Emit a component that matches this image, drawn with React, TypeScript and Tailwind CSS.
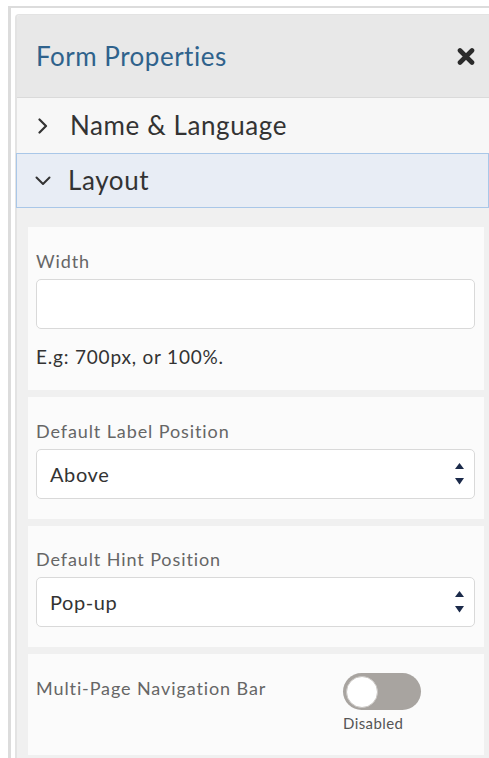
import React from 'react';

const font = { fontFamily: 'Lato, "Open Sans", "Liberation Sans", sans-serif' };

const Chevron: React.FC<{ open?: boolean }> = ({ open }) =>
  open ? (
    <svg width="16" height="10" viewBox="0 0 16 10" className="shrink-0">
      <path d="M1.5 1.5 L8 8 L14.5 1.5" fill="none" stroke="#333" strokeWidth="2" strokeLinecap="round" strokeLinejoin="round" />
    </svg>
  ) : (
    <svg width="10" height="16" viewBox="0 0 10 16" className="shrink-0">
      <path d="M1.5 1.5 L8 8 L1.5 14.5" fill="none" stroke="#333" strokeWidth="2.2" strokeLinecap="round" strokeLinejoin="round" />
    </svg>
  );

const CloseIcon: React.FC = () => (
  <svg width="18" height="17" viewBox="0 0 18 17">
    <path d="M3 2.5 L15 14.5 M15 2.5 L3 14.5" fill="none" stroke="#2b2b2b" strokeWidth="4.6" strokeLinecap="round" />
  </svg>
);

const SelectArrows: React.FC = () => (
  <svg width="9" height="22" viewBox="0 0 9 22">
    <path d="M4.5 0 L9 6 L0 6 Z" fill="#1b2a4a" />
    <path d="M0 15 L9 15 L4.5 21.5 Z" fill="#1b2a4a" />
  </svg>
);

const Select: React.FC<{ value: string }> = ({ value }) => (
  <div className="h-[50px] rounded-[5px] border border-[#d9d9d9] bg-white flex items-center justify-between pl-[13px] pr-[10px]">
    <span className="text-[20px] tracking-[0.6px] text-[#333]">{value}</span>
    <SelectArrows />
  </div>
);

const Card: React.FC<{ className?: string; children: React.ReactNode }> = ({ className = '', children }) => (
  <div className={`bg-[#fbfbfb] pl-[8px] pr-[9px] ${className}`}>{children}</div>
);

const labelCls = 'block text-[18px] leading-[24px] tracking-[0.9px] text-[#666]';

const App: React.FC = () => {
  return (
    <div className="min-h-screen bg-white pt-[6px] pl-[8px] overflow-hidden" style={font}>
      <div className="h-[752px] border-t-2 border-l-[3px] border-[#dcdcdc] pt-[6px] pl-[4px]">
        <div className="h-full bg-[#f0f0f0] border-l-2 border-t border-[#e3e3e3] rounded-tl-[4px] flex flex-col">
          {/* Panel header */}
          <div className="h-[83px] shrink-0 bg-[#e8e8e8] border-b border-[#dadada] flex items-center justify-between pl-[19px] pr-[14px] rounded-tl-[4px]">
            <h2 className="text-[26px] tracking-[0.5px] text-[#2f628c] pt-[1px]">Form Properties</h2>
            <CloseIcon />
          </div>

          {/* Accordion headers */}
          <div className="h-[55px] shrink-0 bg-[#f7f7f7] flex items-center gap-[22px] pl-[21px]">
            <Chevron />
            <span className="text-[26px] tracking-[0.6px] text-[#333]">Name &amp; Language</span>
          </div>
          <div className="h-[55px] shrink-0 bg-[#e8edf5] border border-[#a9c7e8] flex items-center gap-[17px] pl-[18px] -ml-[1px]">
            <Chevron open />
            <span className="text-[26px] tracking-[0.6px] text-[#333]">Layout</span>
          </div>

          {/* Layout section */}
          <div className="flex flex-col gap-[7px] pl-[11px] pr-[5px] pt-[19px]">
            <Card className="pt-[22px] pb-[21px]">
              <label className={labelCls}>Width</label>
              <div className="mt-[6px] h-[50px] rounded-[5px] border border-[#d9d9d9] bg-white" />
              <p className="mt-[16px] text-[19px] leading-[24px] tracking-[0.8px] text-[#333]">E.g: 700px, or 100%.</p>
            </Card>

            <Card className="pt-[22px] pb-[20px]">
              <label className={`${labelCls} mb-[6px]`}>Default Label Position</label>
              <Select value="Above" />
            </Card>

            <Card className="pt-[21px] pb-[20px]">
              <label className={`${labelCls} mb-[6px]`}>Default Hint Position</label>
              <Select value="Pop-up" />
            </Card>

            <Card className="pt-[19px] h-[101px] flex items-start">
              <label className={`${labelCls} w-[307px] shrink-0 mt-[3px]`}>Multi-Page Navigation Bar</label>
              <div className="flex flex-col items-start">
                <div className="w-[78px] h-[37px] rounded-full bg-[#a8a4a0] flex items-center pl-[3px]">
                  <div className="w-[32px] h-[32px] rounded-full bg-white border border-[#c9c6c3]" />
                </div>
                <span className="mt-[3px] text-[15px] leading-[20px] tracking-[0.4px] text-[#555]">Disabled</span>
              </div>
            </Card>
          </div>
        </div>
      </div>
    </div>
  );
};

export default App;
